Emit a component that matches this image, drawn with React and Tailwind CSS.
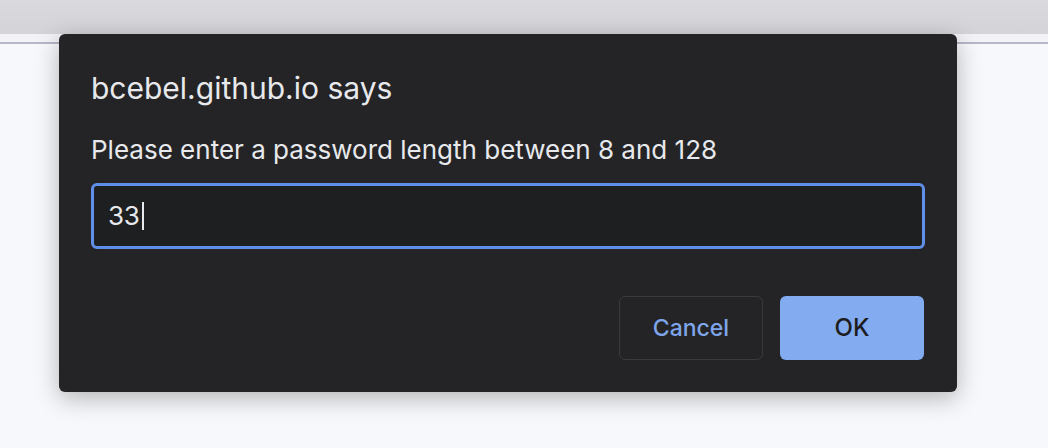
export default function App() {
  return (
    <div
      className="relative w-[1048px] h-[448px] overflow-hidden bg-[#f7f8fb]"
      style={{ fontFamily: "Inter, 'Noto Sans', sans-serif" }}
    >
      <div className="h-[34px] bg-gradient-to-b from-[#d9d9de] to-[#d3d3d8]" />
      <div className="h-[8px] bg-[#f2f2f7]" />
      <div className="h-[2px] bg-[#b7b6ca]" />

      <div className="absolute left-[59px] top-[34px] w-[898px] h-[358px] rounded-[6px] bg-[#242426] shadow-[0_6px_24px_rgba(0,0,0,0.28)] px-[32px] pt-[39px]">
        <div className="text-[30px] leading-[30px] text-[#e8e9ec] tracking-[0px]">
          bcebel.github.io says
        </div>
        <div className="mt-[34px] text-[26px] leading-[26px] text-[#e8e9ec] tracking-[0px]">
          Please enter a password length between 8 and 128
        </div>
        <div className="mt-[20px] h-[66px] w-[834px] rounded-[6px] border-[3px] border-[#5f8fe8] bg-[#1e1f21] flex items-center pl-[14px]">
          <span className="text-[26px] leading-[26px] text-[#e8e9ec] tracking-[-0.3px]">33</span>
          <span className="ml-[2px] w-[2px] h-[28px] bg-[#e8e9ec]" />
        </div>
        <div className="mt-[47px] flex justify-end gap-[17px] pr-[1px]">
          <button className="w-[144px] h-[64px] rounded-[6px] border border-[#3a3a3d] bg-[#242426] text-[23px] font-medium text-[#7fa6ea]">
            Cancel
          </button>
          <button className="w-[144px] h-[64px] rounded-[6px] bg-[#83abf0] text-[24px] font-medium text-[#1d1d1f]">
            OK
          </button>
        </div>
      </div>
    </div>
  );
}
